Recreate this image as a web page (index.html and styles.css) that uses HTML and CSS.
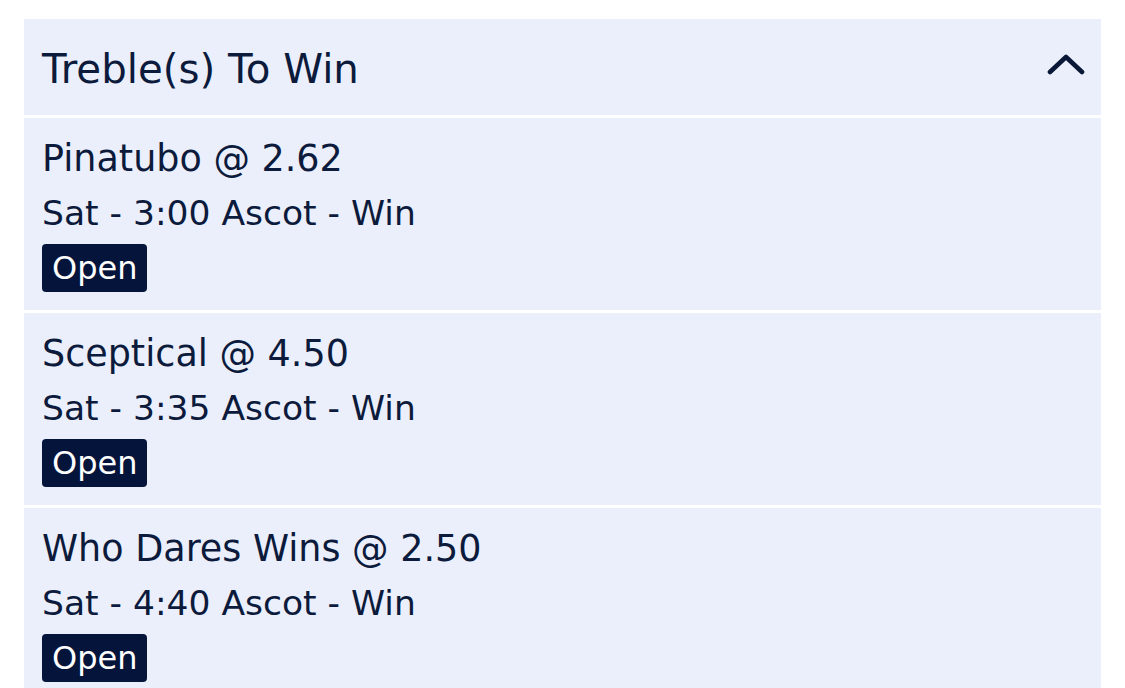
FILE: index.html
```html
<!DOCTYPE html>
<html>
<head>
<meta charset="utf-8">
<link rel="stylesheet" href="styles.css">
</head>
<body>
<div class="panel">
  <div class="header">
    <span class="title">Treble(s) To Win</span>
    <svg class="chevron" width="38" height="22" viewBox="0 0 38 22"><path d="M3 19 L19 4 L35 19" fill="none" stroke="#0a1838" stroke-width="4.6" stroke-linecap="round" stroke-linejoin="round"/></svg>
  </div>
  <div class="leg">
    <div class="name">Pinatubo @ 2.62</div>
    <div class="meta">Sat - 3:00 Ascot - Win</div>
    <span class="badge">Open</span>
  </div>
  <div class="leg">
    <div class="name">Sceptical @ 4.50</div>
    <div class="meta">Sat - 3:35 Ascot - Win</div>
    <span class="badge">Open</span>
  </div>
  <div class="leg">
    <div class="name">Who Dares Wins @ 2.50</div>
    <div class="meta">Sat - 4:40 Ascot - Win</div>
    <span class="badge">Open</span>
  </div>
</div>
</body>
</html>
```
FILE: styles.css
```css
html, body {
  margin: 0;
  padding: 0;
  background: #ffffff;
}
body {
  font-family: "DejaVu Sans", Verdana, sans-serif;
  color: #0c1a3b;
  padding: 19px 24px 0 24px;
}
.panel {
  display: flex;
  flex-direction: column;
  gap: 3px;
}
.header {
  height: 96px;
  background: #ebeffb;
  display: flex;
  align-items: center;
  justify-content: space-between;
  padding: 0 16px 0 18px;
}
.title {
  font-size: 40.3px;
  line-height: 1;
  margin-top: 6px;
}
.chevron {
  display: block;
  margin-top: -7px;
}
.leg {
  background: #ebeffb;
  height: 192px;
  box-sizing: border-box;
  padding: 19px 18px 0 18px;
  display: flex;
  flex-direction: column;
  align-items: flex-start;
}
.name {
  font-size: 36.5px;
  line-height: 44px;
}
.meta {
  font-size: 34.5px;
  line-height: 44px;
  margin-top: 10px;
}
.badge {
  margin-top: 9px;
  background: #04143a;
  color: #ffffff;
  font-size: 32px;
  line-height: 48px;
  padding: 0 10px;
  border-radius: 4px;
}
```
